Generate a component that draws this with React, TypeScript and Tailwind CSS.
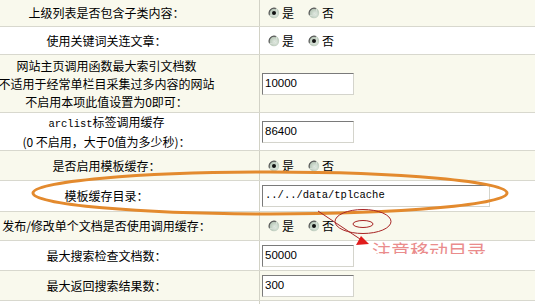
import React from "react";

const CJK = '"Noto Sans CJK SC", "Noto Sans CJK JP", sans-serif';

function Radio({ checked }: { checked: boolean }) {
  return (
    <svg width="12" height="12" viewBox="0 0 12 12" className="shrink-0">
      <defs>
        <radialGradient id="rg" cx="0.6" cy="0.6" r="0.6">
          <stop offset="0" stopColor="#e6eee6" />
          <stop offset="1" stopColor="#aebfae" />
        </radialGradient>
      </defs>
      <circle cx="6" cy="6" r="5.2" fill="url(#rg)" />
      <path d="M1.6 8.2 A5 5 0 0 1 8.2 1.6" stroke="#5a5a5a" strokeWidth="1.2" fill="none" />
      <path d="M8.2 1.6 A5 5 0 0 1 1.6 8.2" stroke="#d8e0d8" strokeWidth="1" fill="none" />
      {checked && <circle cx="6" cy="6" r="2" fill="#111" />}
    </svg>
  );
}

function RadioPair({ yes }: { yes: boolean }) {
  return (
    <div className="flex items-center pl-[6px]">
      <Radio checked={yes} />
      <span className="ml-[2px] text-[12px] text-black leading-none">是</span>
      <span className="w-[14px]" />
      <Radio checked={!yes} />
      <span className="ml-[2px] text-[12px] text-black leading-none">否</span>
    </div>
  );
}

function Input({ value, wide, mono }: { value: string; wide?: boolean; mono?: boolean }) {
  return (
    <div
      className={`${wide ? "w-[228px]" : "w-[92px]"} h-[22px] bg-white border border-t-[#7a7a7a] border-l-[#7a7a7a] border-r-[#d4d4cc] border-b-[#d4d4cc] flex items-center pl-[2px] text-black whitespace-nowrap overflow-hidden`}
      style={{ fontFamily: mono ? '"Liberation Mono", monospace' : '"Liberation Sans", Arial, sans-serif' }}
    >
      <span className={mono ? "text-[10.5px]" : "text-[11.5px]"}>{value}</span>
    </div>
  );
}

type Row = {
  h: string;
  cream: boolean;
  label: React.ReactNode;
  right: React.ReactNode;
};

const rows: Row[] = [
  { h: "h-[27px]", cream: true, label: "上级列表是否包含子类内容：", right: <RadioPair yes={true} /> },
  { h: "h-[28px]", cream: false, label: "使用关键词关连文章：", right: <RadioPair yes={false} /> },
  {
    h: "h-[58px]",
    cream: true,
    label: (
      <>
        <div>网站主页调用函数最大索引文档数</div>
        <div>不适用于经常单栏目采集过多内容的网站</div>
        <div>不启用本项此值设置为0即可：</div>
      </>
    ),
    right: <Input value="10000" />,
  },
  {
    h: "h-[38px]",
    cream: false,
    label: (
      <>
        <div>
          <span className="text-[10.5px]" style={{ fontFamily: '"Liberation Mono", monospace' }}>arclist</span>标签调用缓存
        </div>
        <div>(0 不启用，大于0值为多少秒)：</div>
      </>
    ),
    right: <Input value="86400" />,
  },
  { h: "h-[30px]", cream: true, label: "是否启用模板缓存：", right: <RadioPair yes={true} /> },
  { h: "h-[31px]", cream: false, label: "模板缓存目录：", right: <Input value="../../data/tplcache" wide mono /> },
  { h: "h-[29px]", cream: true, label: "发布/修改单个文档是否使用调用缓存：", right: <RadioPair yes={false} /> },
  { h: "h-[30px]", cream: false, label: "最大搜索检查文档数：", right: <Input value="50000" /> },
  { h: "h-[30px]", cream: true, label: "最大返回搜索结果数：", right: <Input value="300" /> },
];

export default function App() {
  return (
    <div className="relative w-[535px] h-[304px] overflow-hidden bg-white" style={{ fontFamily: CJK }}>
      <div className="flex flex-col">
        {rows.map((r, i) => (
          <div
            key={i}
            className={`flex ${r.h} border-b border-[#d8d8ce] ${r.cream ? "bg-[#f9f9ed]" : "bg-white"}`}
          >
            <div className="w-[260px] shrink-0 border-r border-[#d2d2c6] flex flex-col justify-center items-center pr-[46px] text-[12px] leading-[18px] text-black whitespace-nowrap text-center">
              {typeof r.label === "string" ? <div>{r.label}</div> : r.label}
            </div>
            <div className="flex-1 flex items-center pl-[2px]">{r.right}</div>
          </div>
        ))}
        <div className="flex h-[4px] bg-white">
          <div className="w-[260px] shrink-0 border-r border-[#d2d2c6]" />
        </div>
      </div>

      {/* annotation overlay */}
      <svg className="absolute left-0 top-0 pointer-events-none" width="535" height="304" viewBox="0 0 535 304">
        <ellipse cx="270" cy="193" rx="237" ry="21" fill="none" stroke="#e38a2e" strokeWidth="3" />
        <ellipse cx="363" cy="221.5" rx="28" ry="12" fill="none" stroke="#a82424" strokeWidth="1" />
        <ellipse cx="363" cy="224" rx="10" ry="3.5" fill="none" stroke="#a82424" strokeWidth="1" />
        <line x1="318" y1="211" x2="360" y2="239" stroke="#a82424" strokeWidth="1" />
        <polygon points="361,236 356,245 369,244" fill="#e01c1c" />
      </svg>
      <div className="absolute left-[372px] top-[241px] h-[13px] overflow-hidden pointer-events-none">
        <div className="text-[19px] leading-none text-[#ea8c8c] whitespace-nowrap tracking-[0px]">注意移动目录</div>
      </div>
    </div>
  );
}
